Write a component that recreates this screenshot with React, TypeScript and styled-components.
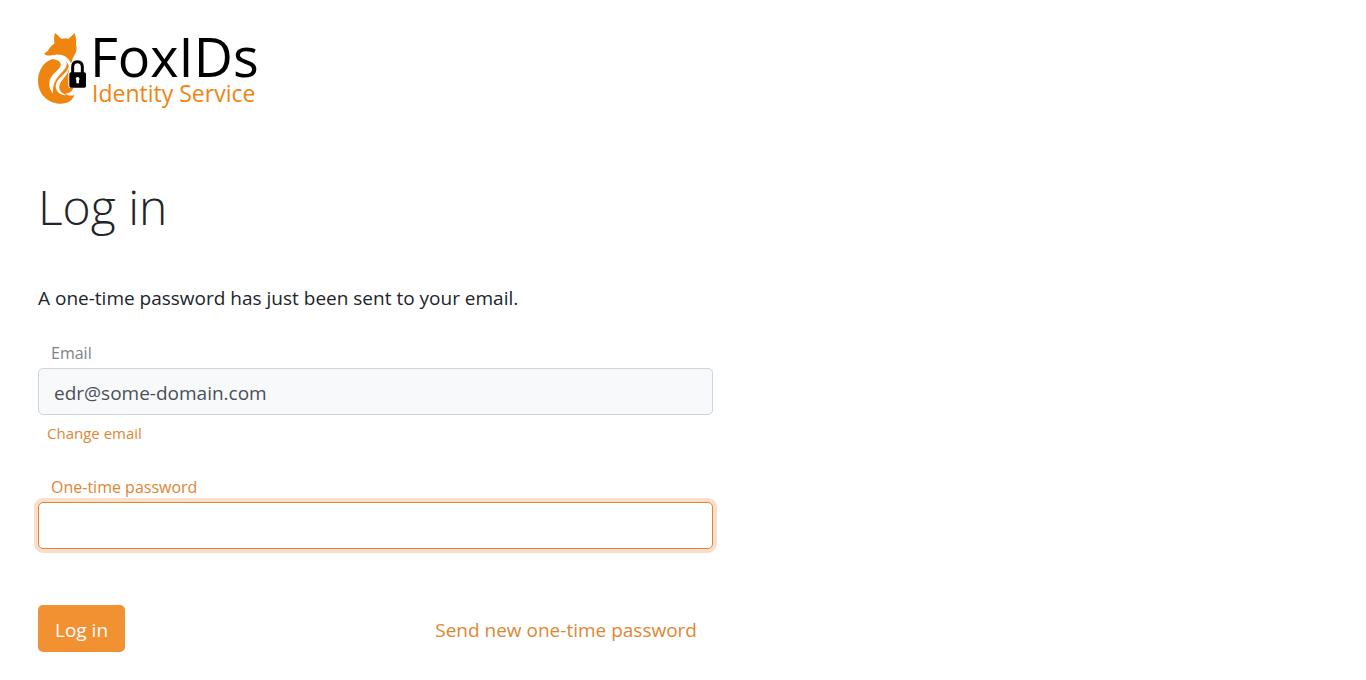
import React from "react";
import styled, { createGlobalStyle } from "styled-components";

const GlobalStyle = createGlobalStyle`
  *, *::before, *::after { box-sizing: border-box; }
  body {
    margin: 0;
    background: #fff;
    color: #212529;
    font-family: "Segoe UI", "Open Sans", "Noto Sans", sans-serif;
    font-size: 19px;
    line-height: 30px;
  }
`;

const Page = styled.div`
  max-width: 751px;
  padding: 32px 38px 28px;
`;

const Brand = styled.header`
  display: flex;
  gap: 3px;
  height: 78px;
`;

const BrandText = styled.div`
  display: flex;
  flex-direction: column;
  white-space: nowrap;
`;

const BrandName = styled.span`
  color: #000;
  font-size: 54px;
  line-height: 48px;
`;

const BrandTagline = styled.span`
  padding-left: 2px;
  color: #ef8511;
  font-size: 23px;
  line-height: 26px;
`;

const Title = styled.h1`
  margin: 68px 0 0;
  font-size: 48px;
  font-weight: 300;
  line-height: 58px;
`;

const Message = styled.p`
  margin: 47px 0 0;
`;

const Form = styled.form`
  display: flex;
  flex-direction: column;
  gap: 29px;
  margin-top: 28px;
`;

const Field = styled.div`
  display: flex;
  flex-direction: column;
  align-items: flex-start;
`;

const Label = styled.label<{ $active?: boolean }>`
  padding-left: 13px;
  color: ${(p) => (p.$active ? "#e08633" : "#7b838a")};
  font-size: 16px;
  line-height: 24px;
  margin-bottom: 3px;
`;

const Input = styled.input<{ $active?: boolean }>`
  width: 100%;
  height: 47px;
  padding: 9px 15px 7px;
  border: 1px solid ${(p) => (p.$active ? "#e08633" : "#ced4da")};
  border-radius: 5px;
  outline: 0;
  background: ${(p) => (p.$active ? "#fff" : "#f8f9fb")};
  box-shadow: ${(p) => (p.$active ? "0 0 0 4px #f9dfcb" : "none")};
  color: #495057;
  font: inherit;
`;

const Link = styled.a<{ $small?: boolean }>`
  color: #e08633;
  font-size: ${(p) => (p.$small ? "15px" : "19px")};
  line-height: ${(p) => (p.$small ? "22px" : "30px")};
  margin: ${(p) => (p.$small ? "7px 0 2px 9px" : "2px 16px 0 0")};
  text-decoration: none;
`;

const Actions = styled.div`
  display: flex;
  align-items: center;
  justify-content: space-between;
  margin-top: 27px;
`;

const Button = styled.button`
  height: 47px;
  padding: 2px 17px 0;
  border: 0;
  border-radius: 5px;
  background: #f29132;
  color: #fff;
  font: inherit;
`;

const FoxLogo = () => (
  <svg width="49" height="72" viewBox="24 22 147 216" aria-hidden="true">
    <g fill="#ef8511">
      <path d="M75 24 L94 42 Q105 39 116 42 L134 25 Q141 43 138 60 Q143 74 135 88 Q127 100 124 118 C115 97 98 88 76 90 C60 94 47 94 42 87 Q55 80 59 70 Q65 61 73 57 Q70 40 75 24Z" />
      <path d="M66 104 C36 114 24 144 24 168 C24 208 54 237 92 237 C112 237 128 228 133 211 C122 215 113 212 107 207 C118 206 127 200 130 190 H117 V124 C108 101 87 99 66 104Z" />
    </g>
    <g fill="#fff">
      <path d="M46 97 C76 88 108 92 110 116 C112 142 65 154 69 207 C45 174 64 153 85 134 C100 119 94 104 52 101Z" />
      <path d="M117 123 C120 151 91 163 88 184 C86 196 94 207 111 211 C90 214 77 199 77 184 C78 159 111 150 117 123Z" />
    </g>
    <path d="M129 143 V125 Q129 109 142 109 Q156 109 156 125 V143" fill="none" stroke="#fff" strokeWidth="14" />
    <rect x="115" y="139" width="56" height="51" rx="7" fill="#fff" />
    <path d="M128 147 V127 Q128 111 142 111 Q157 111 157 127 V147" fill="none" stroke="#000" strokeWidth="9" />
    <rect x="118" y="143" width="50" height="46" rx="5" />
    <path d="M143 157 a6 6 0 0 1 4 10 L147 176 H139 L139 167 A6 6 0 0 1 143 157Z" fill="#fff" />
  </svg>
);

export default function App() {
  return (
    <>
      <GlobalStyle />
      <Page>
        <Brand>
          <FoxLogo />
          <BrandText>
            <BrandName>FoxIDs</BrandName>
            <BrandTagline>Identity Service</BrandTagline>
          </BrandText>
        </Brand>
        <main>
          <Title>Log in</Title>
          <Message>A one-time password has just been sent to your email.</Message>
          <Form onSubmit={(e) => e.preventDefault()}>
            <Field>
              <Label htmlFor="email">Email</Label>
              <Input id="email" type="email" defaultValue="edr@some-domain.com" readOnly />
              <Link href="#change-email" $small>Change email</Link>
            </Field>
            <Field>
              <Label htmlFor="otp" $active>One-time password</Label>
              <Input id="otp" type="password" autoComplete="one-time-code" $active />
            </Field>
            <Actions>
              <Button type="submit">Log in</Button>
              <Link href="#resend">Send new one-time password</Link>
            </Actions>
          </Form>
        </main>
      </Page>
    </>
  );
}
